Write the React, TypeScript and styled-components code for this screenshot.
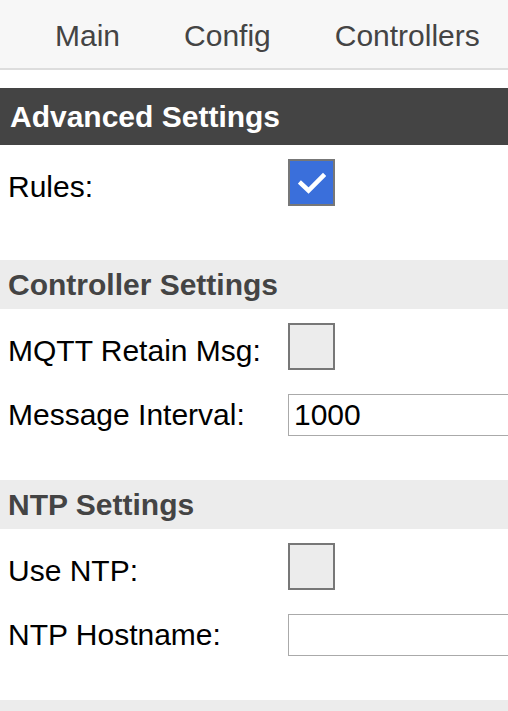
import React from 'react';
import styled, { createGlobalStyle } from 'styled-components';

const GlobalStyle = createGlobalStyle`
  body {
    margin: 0;
    overflow: hidden;
    background: #fff;
    font-family: "Liberation Sans", Arial, sans-serif;
  }
`;

const Nav = styled.nav`
  display: flex;
  align-items: center;
  gap: 64px;
  box-sizing: border-box;
  height: 70px;
  padding: 3px 0 0 55px;
  background-color: #f7f7f7;
  border-bottom: 2px solid #ddd;
`;

const NavLink = styled.a`
  font-size: 30px;
  color: #444;
  text-decoration: none;
  white-space: nowrap;
`;

const Content = styled.main`
  margin-top: 18px;
`;

const Heading = styled.h2<{ dark?: boolean }>`
  display: flex;
  align-items: center;
  box-sizing: border-box;
  height: ${(p) => (p.dark ? '57px' : '49px')};
  margin: 0;
  padding-left: ${(p) => (p.dark ? '10px' : '8px')};
  font-size: 30px;
  font-weight: bold;
  color: ${(p) => (p.dark ? '#fff' : '#444')};
  background-color: ${(p) => (p.dark ? '#444' : '#ececec')};
`;

const Body = styled.div<{ bottom: number }>`
  display: flex;
  flex-direction: column;
  gap: 24px;
  padding: 14px 0 ${(p) => p.bottom}px 8px;
`;

const Row = styled.div`
  display: flex;
  align-items: center;
`;

const Label = styled.label<{ shift?: boolean }>`
  width: 280px;
  flex-shrink: 0;
  padding-top: ${(p) => (p.shift ? '8px' : '0')};
  font-size: 30px;
  color: #000;
`;

const Box = styled.span<{ checked?: boolean }>`
  display: flex;
  align-items: center;
  justify-content: center;
  box-sizing: border-box;
  width: 47px;
  height: 47px;
  border: 2px solid #777;
  background-color: ${(p) => (p.checked ? '#3a6fdb' : '#ececec')};
`;

const TextInput = styled.input`
  box-sizing: border-box;
  width: 320px;
  height: 42px;
  flex-shrink: 0;
  padding: 0 5px;
  border: 1px solid #aaa;
  font-family: "Liberation Sans", Arial, sans-serif;
  font-size: 30px;
  color: #000;
  outline: none;
`;

const Check = () => (
  <svg width="28" height="22" viewBox="0 0 28 22">
    <path d="M3 11.5 L10.5 18.5 L25 4" fill="none" stroke="#fff" strokeWidth="4.5" strokeLinecap="square" />
  </svg>
);

const CheckRow = ({ label, checked }: { label: string; checked?: boolean }) => (
  <Row>
    <Label shift>{label}</Label>
    <Box checked={checked}>{checked && <Check />}</Box>
  </Row>
);

const InputRow = ({ label, value }: { label: string; value: string }) => (
  <Row>
    <Label>{label}</Label>
    <TextInput defaultValue={value} />
  </Row>
);

export default function App() {
  return (
    <>
      <GlobalStyle />
      <Nav>
        <NavLink>Main</NavLink>
        <NavLink>Config</NavLink>
        <NavLink>Controllers</NavLink>
      </Nav>
      <Content>
        <Heading dark>Advanced Settings</Heading>
        <Body bottom={54}>
          <CheckRow label="Rules:" checked />
        </Body>
        <Heading>Controller Settings</Heading>
        <Body bottom={44}>
          <CheckRow label="MQTT Retain Msg:" />
          <InputRow label="Message Interval:" value="1000" />
        </Body>
        <Heading>NTP Settings</Heading>
        <Body bottom={44}>
          <CheckRow label="Use NTP:" />
          <InputRow label="NTP Hostname:" value="" />
        </Body>
        <Heading />
      </Content>
    </>
  );
}
